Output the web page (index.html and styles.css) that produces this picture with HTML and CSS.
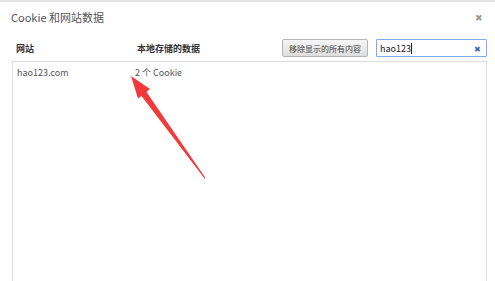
FILE: index.html
```html
<!DOCTYPE html>
<html>
<head>
  <meta charset="utf-8">
  <link rel="stylesheet" href="styles.css">
</head>
<body>
  <div class="dialog">
    <div class="title-bar">
      <span class="title">Cookie 和网站数据</span>
      <span class="close">&#x2716;</span>
    </div>

    <div class="toolbar">
      <span class="col-site">网站</span>
      <span class="col-data">本地存储的数据</span>
      <button class="remove-all">移除显示的所有内容</button>
      <div class="search">
        <span class="search-text">hao123</span><span class="caret"></span>
        <span class="search-clear">&#x2716;</span>
      </div>
    </div>

    <div class="list">
      <div class="row">
        <span class="site">hao123.com</span>
        <span class="data">2 个 Cookie</span>
      </div>
    </div>
  </div>

  <!-- annotation arrow drawn over the screenshot -->
  <svg class="arrow" width="495" height="281" viewBox="0 0 495 281">
    <polygon fill="#f23a3a" points="131,76 150,89 146.5,92 205.5,178 204.5,178.4 141.5,96 138,98.5"/>
  </svg>
</body>
</html>
```

FILE: styles.css
```css
body {
  margin: 0;
  width: 495px;
  height: 281px;
  overflow: hidden;
  background: #fff;
  font-family: "Noto Sans CJK SC", "Noto Sans", sans-serif;
  position: relative;
}
.dialog {
  border-top: 2px solid #e3e3e3;
  height: 279px;
  display: flex;
  flex-direction: column;
}
.title-bar {
  display: flex;
  justify-content: space-between;
  align-items: center;
  padding: 7px 11px 0 11px;
  height: 16px;
}
.title {
  font-size: 11px;
  color: #555;
}
.close {
  font-size: 9px;
  color: #999;
  margin-right: 1px;
}
.toolbar {
  display: flex;
  align-items: center;
  margin-top: 14px;
  padding: 0 8px 0 16px;
  height: 18px;
}
.col-site {
  width: 121px;
  font-size: 9px;
  font-weight: bold;
  color: #333;
}
.col-data {
  flex: 1;
  font-size: 9px;
  font-weight: bold;
  color: #333;
}
.remove-all {
  height: 18px;
  width: 86px;
  padding: 0;
  margin: 0 8px 0 0;
  border: 1px solid #b4b4b4;
  border-radius: 2px;
  background: linear-gradient(#f6f6f6, #dedede);
  font-family: inherit;
  font-size: 8px;
  color: #444;
  white-space: nowrap;
}
.search {
  width: 106px;
  height: 16px;
  border: 1px solid #84a9ec;
  border-radius: 1px;
  display: flex;
  align-items: center;
  padding-left: 3px;
}
.search-text {
  font-size: 9px;
  color: #222;
}
.caret {
  width: 1px;
  height: 11px;
  background: #222;
}
.search-clear {
  margin-left: auto;
  margin-right: 5px;
  font-size: 8px;
  color: #3a66b8;
}
.list {
  flex: 1;
  margin: 4px 8px 0 12px;
  border: 1px solid #dedede;
  border-bottom: none;
}
.row {
  display: flex;
  padding: 2px 0 0 4px;
  height: 16px;
  align-items: center;
}
.site {
  width: 118px;
  font-size: 9px;
  color: #555;
}
.data {
  font-size: 9px;
  color: #555;
}
.arrow {
  position: absolute;
  left: 0;
  top: 0;
  pointer-events: none;
}
```
